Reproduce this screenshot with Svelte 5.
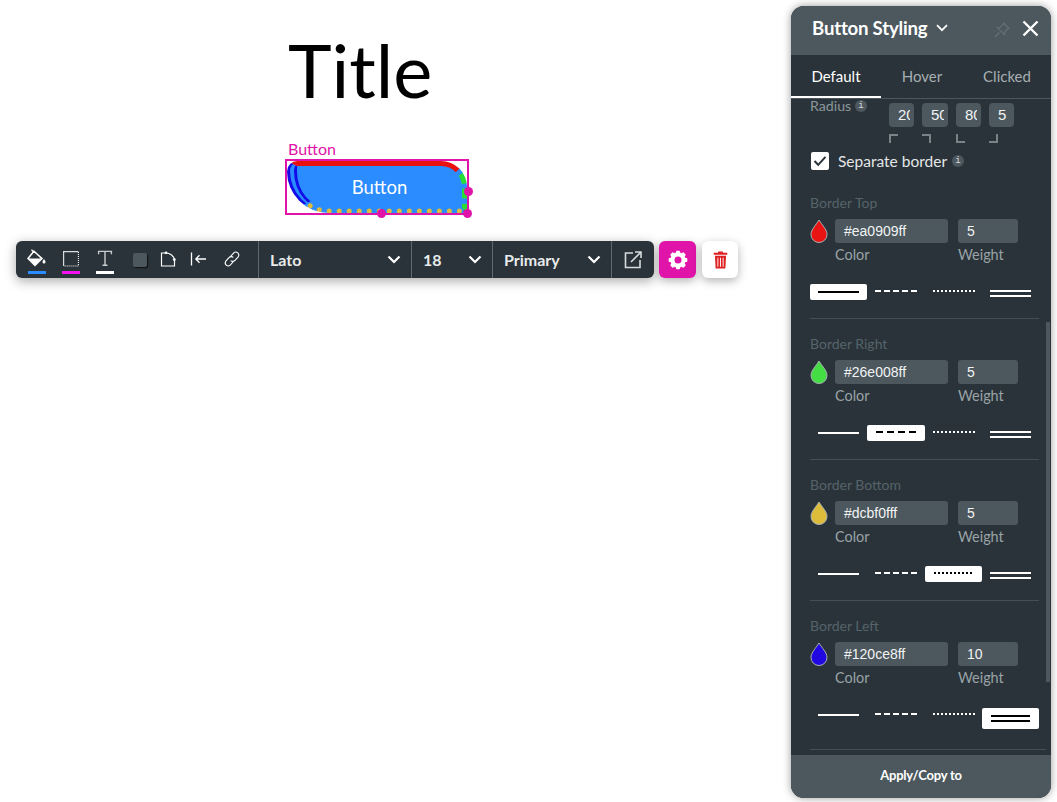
<script>
  const borders = [
    { name: 'Border Top', color: '#e81414', hex: '#ea0909ff', weight: 5, active: 0 },
    { name: 'Border Right', color: '#44dd44', hex: '#26e008ff', weight: 5, active: 1 },
    { name: 'Border Bottom', color: '#dcbc3a', hex: '#dcbf0fff', weight: 5, active: 2 },
    { name: 'Border Left', color: '#2208e0', hex: '#120ce8ff', weight: 10, active: 3 }
  ]
  const styles = ['solid', 'dashed', 'dotted', 'double']
  const radius = [
    { value: 20, width: 25 },
    { value: 50, width: 26 },
    { value: 80, width: 25 },
    { value: 5, width: 25 }
  ]
  const corners = ['tl', 'tr', 'bl', 'br']
  const teeth = [0, 45, 90, 135, 180, 225, 270, 315]
</script>

<div class="canvas">
  <h1>Title</h1>
  <div class="label">Button</div>
  <div class="selection">
    <button class="demo">Button</button>
    <span class="handle right"></span>
    <span class="handle bottom"></span>
    <span class="handle corner"></span>
  </div>
</div>

<div class="toolbar-wrap">
  <div class="toolbar">
    <div class="tools">
      <span class="tool">
        <svg width="20" height="20" viewBox="1 0 20 20">
          <path d="M5.5 .8 L8 3.4" fill="none" stroke="#fff" stroke-width="1.3" />
          <path d="M8 2.2 L16 9.6 L9 16.4 L2 9.4 Z" fill="none" stroke="#fff" stroke-width="1.5" />
          <path d="M2.6 9.6 H15.6 L9 16 Z" fill="#fff" />
          <path d="M18 10 c1 1.6 1.5 2.3 1.5 3 a1.5 1.5 0 0 1 -3 0 c0 -.7 .5 -1.4 1.5 -3Z" fill="#fff" />
        </svg>
        <i class="bar blue"></i>
      </span>
      <span class="tool">
        <svg width="18" height="18" viewBox="0 0 18 18">
          <path d="M1.6 16 V1.6 H16.4" fill="none" stroke="#d8dcde" stroke-width="1.2" />
          <path d="M16.4 2 V16 H2" fill="none" stroke="#fff" stroke-width="1.1" stroke-dasharray="1 1" />
        </svg>
        <i class="bar magenta"></i>
      </span>
      <span class="tool">
        <svg width="20" height="20" viewBox="0 0 20 20">
          <path d="M3.6 5.2 V2.4 H16.4 V5.2 M10 2.4 V16.2 M7.5 16.2 H12.5" fill="none" stroke="#c8ccce" stroke-width="1.4" />
        </svg>
        <i class="bar white"></i>
      </span>
      <span class="tool"><span class="swatch"></span></span>
      <span class="tool corner-tool">
        <svg width="16" height="16" viewBox="0 0 16 16">
          <path d="M1.5 2 H6 C10 2 14 5 14.5 9 V15 H1.5 Z" fill="none" stroke="#fff" stroke-width="1.2" />
          <circle cx="6" cy="1.8" r="1.4" fill="#fff" />
          <circle cx="14.3" cy="8.6" r="1.4" fill="#fff" />
        </svg>
      </span>
      <span class="tool align-tool">
        <svg width="16" height="16" viewBox="0 0 16 16">
          <path d="M1.5 1.5 V14.5 M16 8 H6 M9.5 4.3 L5.8 8 L9.5 11.7" fill="none" stroke="#fff" stroke-width="1.3" />
        </svg>
      </span>
      <span class="tool">
        <svg width="18" height="18" viewBox="0 0 18 18" fill="none" stroke="#fff" stroke-width="1.1">
          <path d="M7.5 6.5 L10.8 2.8 a3 3 0 0 1 4.4 4 L12 10.4 a3 3 0 0 1 -4.3 .2" />
          <path d="M10.5 11.5 L7.2 15.2 a3 3 0 0 1 -4.4 -4 L6 7.6 a3 3 0 0 1 4.3 -.2" />
        </svg>
      </span>
    </div>
    <div class="select font"><span>Lato</span><svg class="chev" width="14" height="9" viewBox="0 0 14 9"><path d="M1.5 1.5 L7 7 L12.5 1.5" /></svg></div>
    <div class="select size"><span>18</span><svg class="chev" width="14" height="9" viewBox="0 0 14 9"><path d="M1.5 1.5 L7 7 L12.5 1.5" /></svg></div>
    <div class="select kind"><span>Primary</span><svg class="chev" width="14" height="9" viewBox="0 0 14 9"><path d="M1.5 1.5 L7 7 L12.5 1.5" /></svg></div>
    <div class="link-out">
      <svg width="18" height="18" viewBox="0 0 18 18" fill="none" stroke="#d8dcde" stroke-width="1.6">
        <path d="M9 2 H1.5 V16.5 H16 V9" />
        <path d="M7 11 L16.5 1.5 M11 1 H17 V7" />
      </svg>
    </div>
  </div>
  <button class="square settings" aria-label="Settings">
    <svg width="20" height="20" viewBox="-10 -10 20 20">
      <circle r="5.6" fill="none" stroke="#fff" stroke-width="4.2" />
      {#each teeth as a}
        <rect x="-2" y="-9.3" width="4" height="4" rx="0.8" fill="#fff" transform="rotate({a})" />
      {/each}
    </svg>
  </button>
  <button class="square trash" aria-label="Delete">
    <svg width="15" height="18" viewBox="0 0 16 20">
      <path fill="#dc2222" d="M5.5 0.5 H10.5 L11 2 H15.5 V4.2 H0.5 V2 H5 Z" />
      <path fill="#dc2222" fill-rule="evenodd" d="M1.8 5.2 H14.2 L13.4 19.5 H2.6 Z M4.6 7.5 V17.5 H5.6 V7.5 Z M7.5 7.5 V17.5 H8.5 V7.5 Z M10.4 7.5 V17.5 H11.4 V7.5 Z" />
    </svg>
  </button>
</div>

<aside class="panel">
  <header>
    <div class="title">Button Styling
      <svg width="12" height="8" viewBox="0 0 12 8"><path d="M1 1.2 L6 6.2 L11 1.2" fill="none" stroke="#fff" stroke-width="1.7" /></svg>
    </div>
    <svg class="pin" width="16" height="16" viewBox="0 0 16 16" fill="none" stroke="#657177" stroke-width="1.1">
      <path d="M9.5 1 L15 6.5 L13.5 7 L10.8 9.8 L10.6 12.8 L3.2 5.4 L6.2 5.2 L9 2.5 Z" />
      <path d="M5.5 10.5 L1 15" />
    </svg>
    <svg class="close" width="17" height="17" viewBox="0 0 17 17"><path d="M1.5 1.5 L15.5 15.5 M15.5 1.5 L1.5 15.5" stroke="#fff" stroke-width="2.4" /></svg>
  </header>
  <nav>
    <span class="tab active">Default</span>
    <span class="tab">Hover</span>
    <span class="tab">Clicked</span>
  </nav>
  <div class="scroll">
    <div class="radius-row">
      <div class="radius-label">Radius <i class="info">i</i></div>
      <div class="radius-grid">
        {#each radius as r, i}
          <div class="radius-cell">
            <div class="num" style="width:{r.width}px"><span>{r.value}</span></div>
            <span class="corner-mark {corners[i]}"></span>
          </div>
        {/each}
      </div>
    </div>
    <div class="separate">
      <span class="check">
        <svg width="14" height="12" viewBox="0 0 14 12"><path d="M1.5 6 L5.2 9.8 L12.5 1.8" fill="none" stroke="#293339" stroke-width="2" /></svg>
      </span>
      Separate border <i class="info">i</i>
    </div>

    {#each borders as b}
      <section>
        <div class="section-title">{b.name}</div>
        <div class="color-row">
          <svg class="drop" width="18" height="24" viewBox="0 0 18 24">
            <path d="M9 1 C12 6 17 10.5 17 15.5 A8 8 0 0 1 1 15.5 C1 10.5 6 6 9 1 Z" fill={b.color} stroke="#a9b0b3" stroke-width="1" />
          </svg>
          <div class="field">
            <div class="input hex">{b.hex}</div>
            <div class="hint">Color</div>
          </div>
          <div class="field">
            <div class="input weight">{b.weight}</div>
            <div class="hint">Weight</div>
          </div>
        </div>
        <div class="styles">
          {#each styles as s, i}
            <div class="style {s}" class:on={i === b.active}><i class="line"></i></div>
          {/each}
        </div>
      </section>
    {/each}
  </div>
  <i class="scrollbar"></i>
  <footer>Apply/Copy to</footer>
</aside>

<style>
  :global(body) {
    margin: 0;
    background: #fff;
    font-family: Lato, sans-serif;
    overflow: hidden;
  }
  .canvas {
    padding: 27px 0 0 288px;
    height: 775px;
  }
  h1 {
    margin: 0;
    font-size: 74px;
    font-weight: 400;
    line-height: 86px;
    color: #000;
  }
  .label {
    margin-top: 27px;
    font-size: 16px;
    line-height: 18px;
    color: #e014a8;
  }
  .selection {
    position: relative;
    margin: 1px 0 0 -3px;
    width: 180px;
    height: 52px;
    border: 2px solid #e014a8;
  }
  .demo {
    display: block;
    box-sizing: border-box;
    width: 180px;
    height: 52px;
    padding: 0;
    background: #2a8cff;
    color: #fff;
    font: 18.5px Lato, sans-serif;
    border-style: solid dashed dotted double;
    border-width: 5px 5px 5px 10px;
    border-color: #ea1010 #28dc38 #dcbc3a #120ce8;
    border-radius: 20px 50px 5px 80px;
  }
  .handle {
    position: absolute;
    width: 9px;
    height: 9px;
    border-radius: 50%;
    background: #e014a8;
  }
  .handle.right { right: -6px; top: 26px; }
  .handle.bottom { left: 90px; bottom: -5px; }
  .handle.corner { right: -5px; bottom: -5px; }

  .toolbar-wrap {
    position: absolute;
    left: 16px;
    top: 241px;
    display: flex;
    gap: 5px;
  }
  .toolbar {
    display: flex;
    height: 37px;
    width: 638px;
    background: #293339;
    border-radius: 6px;
    box-shadow: 0 3px 12px rgba(0, 0, 0, 0.35);
    color: #fff;
  }
  .tools {
    display: flex;
    width: 242px;
    box-sizing: border-box;
    padding-left: 11px;
    gap: 14px;
    align-items: center;
    flex: none;
  }
  .tool {
    position: relative;
    width: 20px;
    height: 37px;
    display: flex;
    align-items: center;
    justify-content: center;
    flex: none;
    margin-top: -2px;
  }
  .corner-tool { margin-left: -5px; }
  .align-tool { margin-left: -4px; }
  .tool svg { display: block; }
  .bar {
    position: absolute;
    left: 1px;
    bottom: 3px;
    width: 18px;
    height: 3px;
  }
  .bar.blue { background: #2a8cff; }
  .bar.magenta { background: #f50ef0; }
  .bar.white { background: #fff; }
  .swatch {
    width: 14px;
    height: 14px;
    border-radius: 2px;
    background: #4c585e;
    box-shadow: 1px 1px 1px #111;
    margin: 3px 0 0 2px;
  }
  .select {
    display: flex;
    align-items: center;
    justify-content: space-between;
    box-sizing: border-box;
    border-left: 1px solid #5f6a70;
    padding: 0 10px 0 11px;
    font-size: 16px;
    font-weight: 700;
    color: #e8eaeb;
  }
  .select.font { width: 153px; }
  .select.size { width: 81px; }
  .select.kind { width: 119px; }
  .chev { fill: none; stroke: #fff; stroke-width: 2.2; }
  .link-out {
    flex: 1;
    border-left: 1px solid #5f6a70;
    display: flex;
    align-items: center;
    justify-content: center;
  }
  .square {
    width: 37px;
    height: 37px;
    padding: 0;
    border: 0;
    border-radius: 6px;
    display: flex;
    align-items: center;
    justify-content: center;
    box-shadow: 0 3px 10px rgba(0, 0, 0, 0.3);
  }
  .settings { background: #e014a8; }
  .trash { background: #fff; width: 36px; margin-left: 1px; }

  .panel {
    position: absolute;
    left: 791px;
    top: 6px;
    width: 260px;
    height: 792px;
    background: #293339;
    border-radius: 13px;
    box-shadow: 0 0 8px rgba(0, 0, 0, 0.4);
    display: flex;
    flex-direction: column;
    overflow: hidden;
    color: #fff;
  }
  header {
    height: 49px;
    box-sizing: border-box;
    flex: none;
    background: #4c585e;
    position: relative;
    z-index: 1;
    display: flex;
    align-items: center;
    padding: 0 0 5px 21px;
  }
  .title {
    font-size: 18.6px;
    font-weight: 700;
    letter-spacing: -0.2px;
    display: flex;
    align-items: center;
    gap: 9px;
  }
  .pin { position: absolute; left: 203px; top: 16px; }
  .close { position: absolute; left: 231px; top: 14px; }
  nav {
    height: 43px;
    flex: none;
    display: flex;
    position: relative;
    z-index: 1;
    background: #293339;
    border-bottom: 1px solid #4c585e;
  }
  .tab {
    width: 82px;
    height: 43px;
    text-align: center;
    font-size: 15px;
    line-height: 43px;
    color: #a7aeb1;
    box-sizing: border-box;
  }
  .tab.active {
    width: 90px;
    color: #fff;
    border-bottom: 2px solid #fff;
  }
  .tab:last-child { width: 88px; }
  .scroll {
    flex: 1;
    overflow: hidden;
    margin-top: -4px;
    padding: 4px 12px 0 19px;
  }
  .radius-row {
    display: flex;
    height: 43px;
  }
  .radius-label {
    width: 79px;
    font-size: 14.2px;
    line-height: 14px;
    color: #8c979c;
    flex: none;
  }
  .info {
    display: inline-flex;
    align-items: center;
    justify-content: center;
    width: 12px;
    height: 12px;
    border-radius: 50%;
    background: #4c585e;
    color: #d8dcde;
    font: 9px "Liberation Mono", monospace;
    vertical-align: 3px;
  }
  .radius-grid {
    display: flex;
    gap: 8px;
    padding-top: 4px;
  }
  .num {
    height: 24px;
    box-sizing: border-box;
    background: #4c585e;
    border-radius: 4px;
    font: 15px/24px "Liberation Sans", sans-serif;
    padding: 0 4px 0 9px;
    color: #f2f3f4;
  }
  .num span {
    display: block;
    overflow: hidden;
    white-space: nowrap;
  }
  .corner-mark {
    display: block;
    width: 7px;
    height: 7px;
    margin-top: 7px;
    border: 0 solid #7a8488;
  }
  .corner-mark.tl { border-width: 2px 0 0 2px; }
  .corner-mark.tr { border-width: 2px 2px 0 0; }
  .corner-mark.bl { border-width: 0 0 2px 2px; }
  .corner-mark.br { border-width: 0 2px 2px 0; }
  .separate {
    display: flex;
    align-items: center;
    gap: 9px;
    height: 18px;
    margin: 10px 0 0 1px;
    font-size: 15.5px;
    color: #e4e6e7;
  }
  .separate .info { margin-left: -4px; vertical-align: 0; }
  .check {
    width: 18px;
    height: 18px;
    background: #fff;
    border-radius: 2px;
    display: flex;
    align-items: center;
    justify-content: center;
  }
  section {
    height: 141px;
    box-sizing: border-box;
    border-bottom: 1px solid #444f55;
    width: 229px;
    padding-top: 16px;
  }
  section:first-of-type { margin-top: 8px; }
  section:last-of-type { height: 149px; width: 236px; }
  .section-title {
    font-size: 14px;
    line-height: 17px;
    color: #56636a;
  }
  .color-row {
    display: flex;
    margin-top: 8px;
  }
  .drop { margin-right: 7px; flex: none; display: block; }
  .field { margin-right: 10px; }
  .input {
    height: 24px;
    box-sizing: border-box;
    background: #4c585e;
    border-radius: 3px;
    font: 14px/24px "Liberation Sans", sans-serif;
    padding-left: 9px;
    color: #f2f3f4;
  }
  .hex { width: 113px; }
  .weight { width: 60px; }
  .hint {
    font-size: 14.4px;
    line-height: 20px;
    margin-top: 2px;
    color: #9aa3a7;
  }
  .styles {
    display: grid;
    grid-template-columns: 57px 58px 57px 57px;
    margin-top: 19px;
    align-items: start;
  }
  .style {
    height: 16px;
    box-sizing: border-box;
    padding-top: 6px;
    display: flex;
    justify-content: center;
    border-radius: 2px;
    color: #fff;
  }
  .style.on { background: #fff; color: #000; }
  .style.solid { padding-top: 7px; }
  .style.double.on { height: 21px; padding-top: 7px; margin-top: 1px; }
  .line {
    display: block;
    width: 41px;
    height: 2.4px;
    background: currentColor;
  }
  .dashed .line {
    width: 42px;
    height: 2px;
    background: repeating-linear-gradient(90deg, currentColor 0 6px, transparent 6px 9px);
  }
  .dashed.on .line {
    width: 40px;
    height: 2.4px;
    background: repeating-linear-gradient(90deg, currentColor 0 7px, transparent 7px 11px);
  }
  .dotted .line {
    width: 42px;
    height: 2px;
    background: repeating-linear-gradient(90deg, currentColor 0 2px, transparent 2px 4px);
  }
  .dotted.on .line { width: 40px; }
  .double .line {
    height: 7px;
    background: linear-gradient(currentColor 0 2px, transparent 2px 5px, currentColor 5px 7px);
  }
  .double.on .line { width: 39px; }
  .scrollbar {
    position: absolute;
    right: 1px;
    top: 316px;
    width: 4px;
    height: 360px;
    background: #4c585e;
  }
  footer {
    height: 43px;
    flex: none;
    background: #4c585e;
    text-align: center;
    font-size: 13px;
    font-weight: 700;
    line-height: 41px;
    letter-spacing: -0.2px;
    position: relative;
  }
</style>
